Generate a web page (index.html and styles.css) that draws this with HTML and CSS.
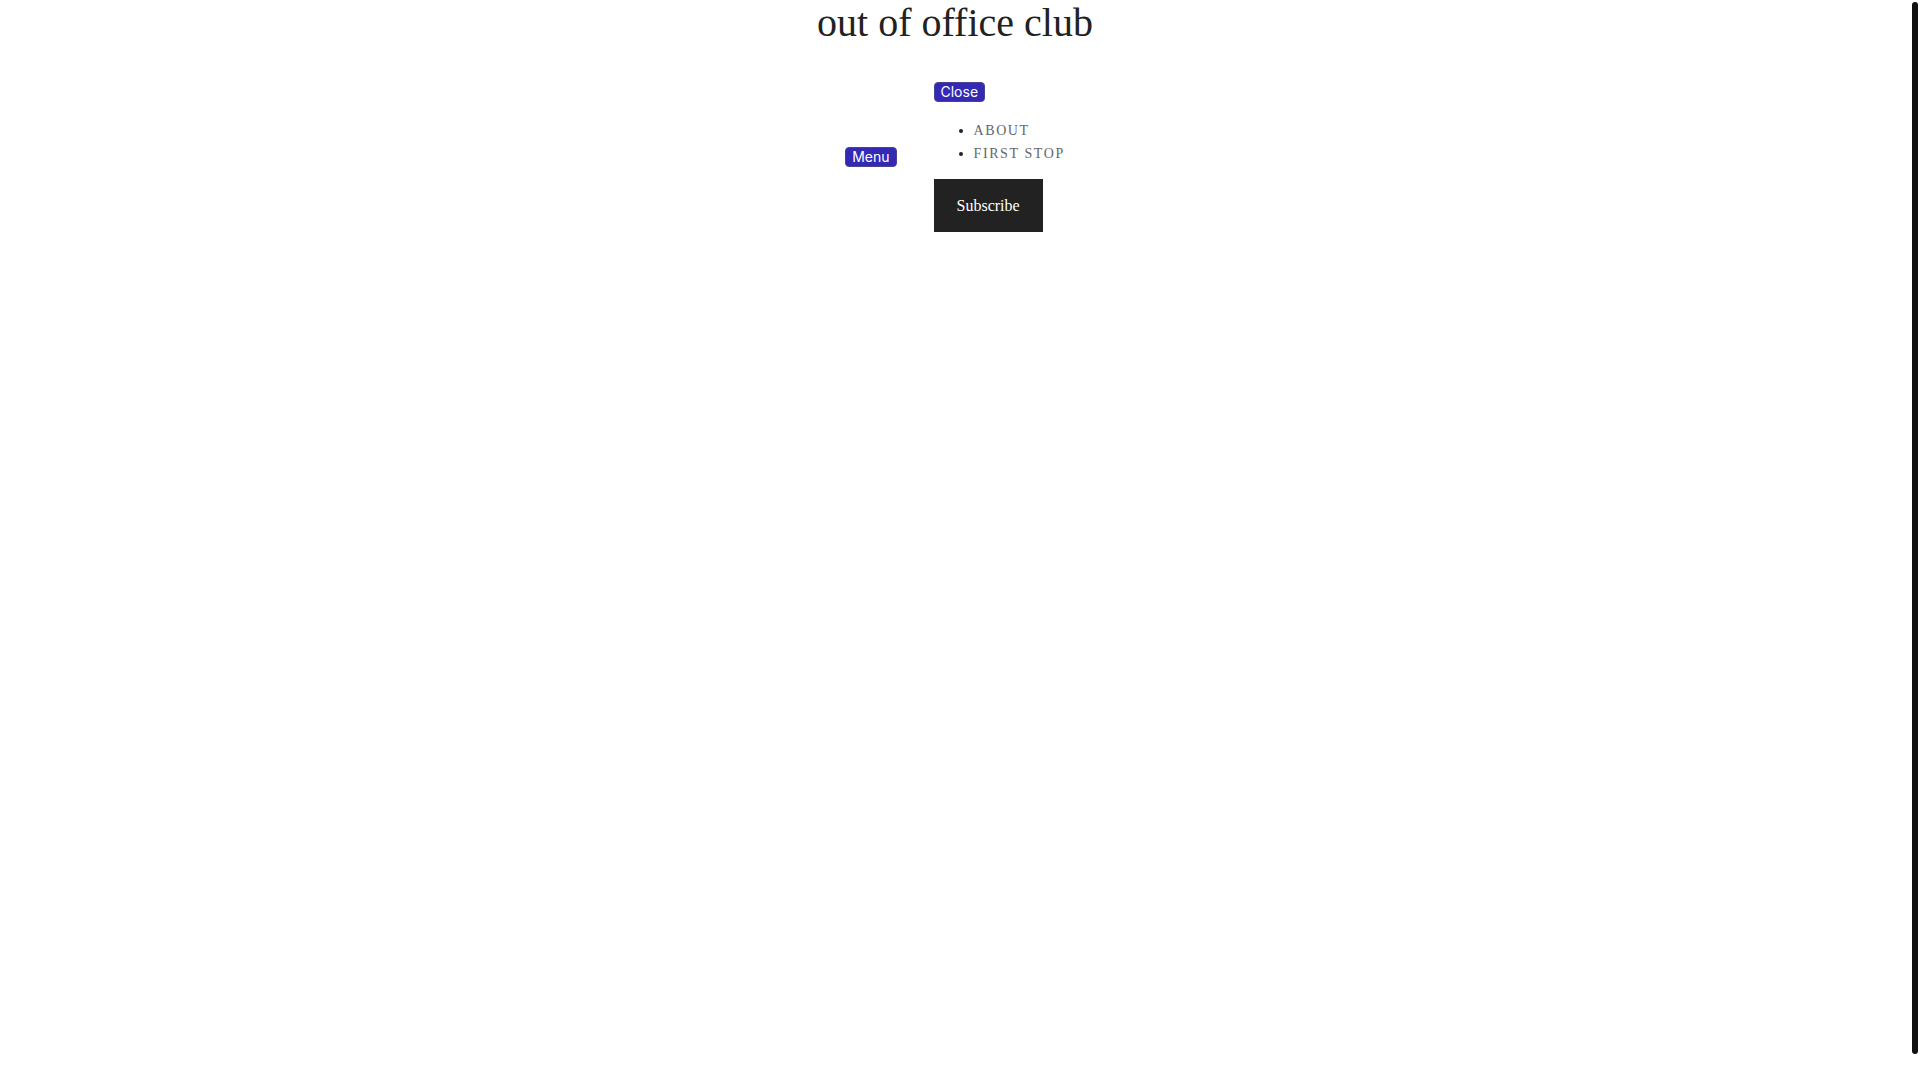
FILE: index.html
```html
<!DOCTYPE html>
<html lang="en">
<head>
    <meta charset="UTF-8">
    <meta name="viewport" content="width=device-width, initial-scale=1.0">
    <title>out of office club</title>
    <link rel="stylesheet" href="styles.css">
</head>
<body>
    <div class="page">
        <header class="header">
            <h1 class="site-title">out of office club</h1>
            <div class="nav-row">
                <button class="nav-button">Menu</button>
                <nav class="nav-panel">
                    <button class="nav-button">Close</button>
                    <ul class="nav-list">
                        <li><a href="#">About</a></li>
                        <li><a href="#">First stop</a></li>
                    </ul>
                    <a class="subscribe" href="#">Subscribe</a>
                </nav>
            </div>
        </header>
    </div>
    <div class="scroll-thumb"></div>
</body>
</html>
```

FILE: styles.css
```css
body {
    margin: 0;
    padding: 0;
    background-color: #fff;
    font-family: "Liberation Serif", "Times New Roman", serif;
    color: #222;
}
.page {
    width: calc(100% - 10px);
}
.header {
    text-align: center;
}
.site-title {
    margin: 0;
    font-size: 40px;
    font-weight: normal;
    line-height: 46px;
    color: #222;
}
.nav-row {
    display: flex;
    justify-content: center;
    align-items: center;
    gap: 37px;
    margin-top: 36px;
    text-align: left;
}
.nav-button {
    height: 20px;
    padding: 0 6px;
    background-color: #3329b5;
    color: #fff;
    border: 1px solid #4a4490;
    border-radius: 4px;
    font-family: Inter, "Liberation Sans", Arial, sans-serif;
    font-size: 14px;
    line-height: 18px;
    cursor: pointer;
}
.nav-panel {
    display: flex;
    flex-direction: column;
    align-items: flex-start;
}
.nav-list {
    margin: 17px 0 14px;
    padding-left: 40px;
    color: #222;
}
.nav-list li {
    font-size: 14px;
    line-height: 23px;
}
.nav-list a {
    color: #666;
    text-decoration: none;
    text-transform: uppercase;
    letter-spacing: 1.6px;
}
.subscribe {
    display: block;
    padding: 17px 23px;
    background-color: #222;
    color: #fff;
    font-size: 16px;
    line-height: 19px;
    text-decoration: none;
}
.scroll-thumb {
    position: fixed;
    top: 2px;
    right: 2px;
    width: 6px;
    height: 1052px;
    background-color: #111;
    border-radius: 3px;
}
```
